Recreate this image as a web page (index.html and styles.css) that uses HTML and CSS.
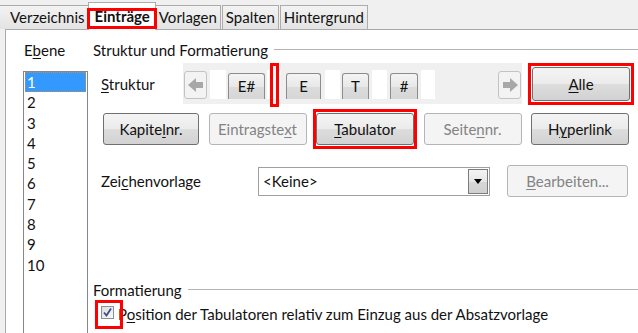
FILE: index.html
```html
<!DOCTYPE html>
<html lang="de">

<head>
  <meta charset="UTF-8">
  <title>Verzeichnis – Einträge</title>
  <link rel="stylesheet" href="styles.css">
</head>

<body>
  <div class="tabs">
    <div class="tab first">Verzeichnis</div>
    <div class="tab active">Einträge</div>
    <div class="tab">Vorlagen</div>
    <div class="tab">Spalten</div>
    <div class="tab">Hintergrund</div>
  </div>

  <div class="panel">
    <div class="levels">
      <div class="caption">E<u>b</u>ene</div>
      <ul class="listbox">
        <li class="selected">1</li>
        <li>2</li>
        <li>3</li>
        <li>4</li>
        <li>5</li>
        <li>6</li>
        <li>7</li>
        <li>8</li>
        <li>9</li>
        <li>10</li>
      </ul>
    </div>

    <div class="main">
      <div class="group-title"><span>Struktur und Formatierung</span></div>

      <div class="struct-row">
        <div class="row-label"><u>S</u>truktur</div>
        <div class="struct-bar">
          <div class="arrow-btn">
            <svg viewBox="0 0 16 14" width="16" height="14"><path d="M0 7 L8 0 L8 4 L15 4 L15 10 L8 10 L8 14 Z" /></svg>
          </div>
          <div class="tokens">
            <div class="field f1"></div>
            <div class="token t-entry">E#</div>
            <div class="field f2"><span class="cursor-mark"></span></div>
            <div class="token t-e">E</div>
            <div class="field f3"></div>
            <div class="token t-t">T</div>
            <div class="field f4"></div>
            <div class="token t-hash">#</div>
            <div class="field f5"></div>
          </div>
          <div class="arrow-btn right">
            <svg viewBox="0 0 16 14" width="16" height="14"><path d="M16 7 L8 0 L8 4 L1 4 L1 10 L8 10 L8 14 Z" /></svg>
          </div>
        </div>
        <button class="btn btn-all marked"><u>A</u>lle</button>
      </div>

      <div class="btn-row">
        <button class="btn btn-chapter">Kapite<u>l</u>nr.</button>
        <button class="btn" disabled>Eintragste<u>x</u>t</button>
        <button class="btn btn-tab marked"><u>T</u>abulator</button>
        <button class="btn" disabled>Seite<u>n</u>nr.</button>
        <button class="btn">H<u>y</u>perlink</button>
      </div>

      <div class="style-row">
        <div class="row-label wide">Zei<u>c</u>henvorlage</div>
        <div class="combo">
          <span class="combo-text">&lt;Keine&gt;</span>
          <span class="combo-btn"><span class="tri"></span></span>
        </div>
        <button class="btn btn-edit" disabled><u>B</u>earbeiten...</button>
      </div>

      <div class="group-title format"><span>Formatierung</span></div>

      <div class="check-row">
        <span class="check">
          <svg viewBox="0 0 13 13" width="13" height="13"><path d="M3 6.5 L5.5 9.5 L10 2.5" /></svg>
        </span>
        <span>P<u>o</u>sition der Tabulatoren relativ zum Einzug aus der Absatzvorlage</span>
      </div>
    </div>
  </div>
</body>

</html>
```

FILE: styles.css
```css
body {
  margin: 0;
  background: #f0f0f0;
  font-family: 'Lato', 'Liberation Sans', sans-serif;
  font-size: 15px;
  color: #111;
  overflow: hidden;
}

u {
  text-decoration-thickness: 1px;
  text-underline-offset: 2px;
}

/* tabs */

.tabs {
  display: flex;
  align-items: flex-end;
  height: 29px;
}

.tab {
  height: 24px;
  line-height: 23px;
  padding: 0 3px;
  border: 1px solid #acacac;
  border-bottom: none;
  background: linear-gradient(#f3f3f3, #e3e3e3);
  box-sizing: border-box;
  margin-right: 1px;
}

.tab.first {
  padding-left: 10px;
  padding-right: 3px;
  border-left: none;
}

.tab.active {
  height: 28px;
  line-height: 27px;
  background: #fff;
  padding: 0 5px 0 6px;
  margin: 0 -1px -1px -2px;
  position: relative;
  z-index: 1;
  font-weight: bold;
}

.tab.active::after {
  content: "";
  position: absolute;
  left: -2px;
  right: -2px;
  top: 5px;
  height: 21px;
  border: 3px solid #f00;
  box-sizing: border-box;
}

/* panel */

.panel {
  display: flex;
  margin-left: 5px;
  border-left: 1px solid #a9a9a9;
  border-top: 1px solid #a9a9a9;
  background: #fff;
  height: 303px;
}

.levels {
  padding-left: 17px;
  width: 64px;
}

.caption {
  margin-top: 10px;
  height: 20px;
  line-height: 20px;
  padding-left: 1px;
}

.listbox {
  list-style: none;
  margin: 11px 0 0 0;
  padding: 0 1px;
  width: 61px;
  height: 262px;
  border: 1px solid #828790;
  border-bottom: none;
}

.listbox li {
  height: 20.3px;
  line-height: 20px;
  padding-left: 2px;
}

.listbox li.selected {
  background: #3399ff;
  color: #fff;
  outline: 1px dotted #d08a3c;
  outline-offset: -1px;
}

.main {
  flex: 1;
  padding-left: 6px;
}

.group-title {
  display: flex;
  align-items: center;
  margin-top: 10px;
  height: 20px;
  line-height: 20px;
}

.group-title::after {
  content: "";
  flex: 1;
  border-top: 1px solid #b4b4b4;
  margin: 0 0 1px 6px;
}

.group-title.format {
  margin-top: 82px;
}

/* structure row */

.struct-row {
  display: flex;
  align-items: center;
  margin-top: 3px;
  height: 41px;
}

.row-label {
  width: 82px;
  padding-left: 8px;
}

.row-label.wide {
  width: 157px;
}

.struct-bar {
  display: flex;
  align-items: flex-start;
  width: 339px;
  height: 41px;
  background: #f0f0f0;
  padding: 7px 1px 0 1px;
  box-sizing: border-box;
}

.arrow-btn {
  width: 23px;
  height: 28px;
  margin-top: 1px;
  border: 1px solid #c3c3c3;
  border-radius: 3px;
  background: #f3f3f3;
  box-sizing: border-box;
  display: flex;
  align-items: center;
  justify-content: center;
}

.arrow-btn svg {
  fill: #a8a8a8;
}

.arrow-btn.right {
  margin-left: auto;
}

.tokens {
  display: flex;
  align-items: flex-start;
  height: 29px;
}

.field {
  position: relative;
  height: 29px;
  background: #fff;
}

.f1 { width: 16px; margin-left: 3px; }
.f2 { width: 14px; margin-left: 2px; }
.f3 { width: 15px; margin-left: 4px; }
.f4 { width: 15px; margin-left: 3px; }
.f5 { width: 14px; margin-left: 3px; }

.cursor-mark {
  position: absolute;
  left: 3px;
  top: -7px;
  width: 9px;
  height: 44px;
  border: 3px solid #f00;
  box-sizing: border-box;
}

.token {
  height: 26px;
  margin-top: 3px;
  border: 1px solid #8c8c8c;
  border-bottom: none;
  border-radius: 3px 3px 0 0;
  background: linear-gradient(#f4f4f4, #e8e8e8 50%, #dcdcdc 51%, #d6d6d6);
  box-sizing: border-box;
  text-align: center;
  line-height: 24px;
}

.t-entry { width: 37px; margin-left: 2px; }
.t-e { width: 35px; margin-left: 5px; }
.t-t { width: 27px; margin-left: 2px; }
.t-hash { width: 28px; margin-left: 3px; }

/* buttons */

.btn {
  font-family: inherit;
  font-size: 15px;
  color: #111;
  height: 32px;
  width: 98px;
  padding: 0;
  border: 1px solid #707070;
  border-radius: 3px;
  background: linear-gradient(#f4f4f4, #ebebeb 50%, #dddddd 51%, #d2d2d2);
  box-sizing: border-box;
}

.btn:disabled {
  color: #838383;
  border-color: #b5b5b5;
  background: #f4f4f4;
}

.marked {
  position: relative;
}

.marked::after {
  content: "";
  position: absolute;
  border: 3px solid #f00;
}

.btn-all {
  height: 34px;
  margin-left: 10px;
}

.btn-all::after {
  left: -5px;
  right: -5px;
  top: -5px;
  bottom: -5px;
}

.btn-tab::after {
  left: -4px;
  right: -4px;
  top: -5px;
  bottom: -5px;
}

.btn-row {
  display: flex;
  gap: 9.5px;
  margin-top: 9px;
  padding-left: 10px;
}

.btn-chapter {
  width: 96px;
}

/* character style row */

.style-row {
  display: flex;
  align-items: center;
  margin-top: 19px;
  height: 34px;
}

.combo {
  display: flex;
  align-items: center;
  width: 232px;
  height: 29px;
  border: 1px solid #a0a0a0;
  box-sizing: border-box;
  padding: 1px;
}

.combo-text {
  flex: 1;
  padding-left: 3px;
}

.combo-btn {
  width: 20px;
  height: 25px;
  border: 1px solid #7c7c7c;
  box-sizing: border-box;
  background: linear-gradient(#f4f4f4, #e6e6e6 50%, #d7d7d7 51%, #d0d0d0);
  display: flex;
  align-items: center;
  justify-content: center;
}

.tri {
  width: 0;
  height: 0;
  border-left: 4px solid transparent;
  border-right: 4px solid transparent;
  border-top: 5px solid #000;
}

.btn-edit {
  width: 121px;
  margin-left: 17px;
}

/* checkbox row */

.check-row {
  display: flex;
  align-items: center;
  margin-top: 4px;
  height: 20px;
  padding-left: 8px;
}

.check {
  position: relative;
  width: 13px;
  height: 13px;
  border: 1px solid #8e8f8f;
  box-sizing: border-box;
  background: linear-gradient(135deg, #dcdcdc, #fafafa);
  margin: -4px 4px 0 0;
}

.check svg {
  position: absolute;
  left: -1px;
  top: -1px;
  fill: none;
  stroke: #3a4f8a;
  stroke-width: 1.8;
}

.check::after {
  content: "";
  position: absolute;
  left: -7px;
  top: -7px;
  width: 28px;
  height: 29px;
  border: 3px solid #f00;
  box-sizing: border-box;
}
```
